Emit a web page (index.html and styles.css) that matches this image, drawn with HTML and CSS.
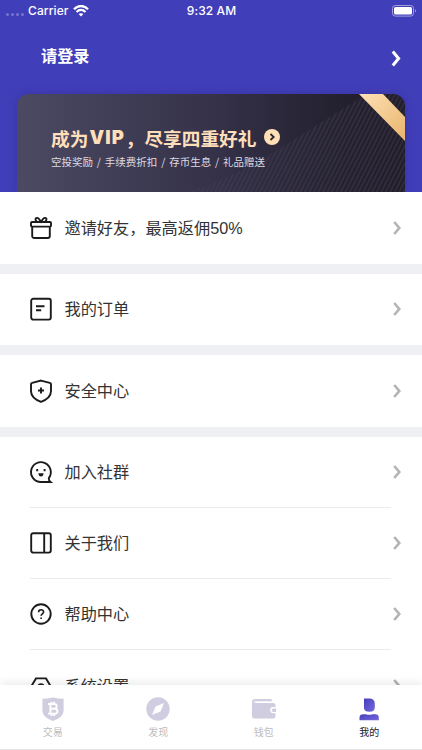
FILE: index.html
```html
<!DOCTYPE html>
<html lang="zh-CN">
<head>
<meta charset="utf-8">
<title>我的</title>
<link rel="stylesheet" href="styles.css">
</head>
<body>
<svg class="defs" width="0" height="0" aria-hidden="true">
  <symbol id="chevron" viewBox="0 0 8 14"><path d="M1.2 1 6.3 7 1.2 13" fill="none" stroke="currentColor" stroke-width="2.7"/></symbol>
</svg>
<div class="app">
  <header class="hero">
    <div class="status">
      <div class="status-left">
        <span class="dots"><i></i><i></i><i></i><i></i></span>
        <span class="carrier">Carrier</span>
        <svg class="wifi" width="16" height="12" viewBox="0 0 16 12" fill="none" stroke="#fff"><path d="M1 4.2C5-.1 11-.1 15 4.2" stroke-width="2.3"/><path d="M3.5 7C6.2 4.2 9.8 4.2 12.5 7" stroke-width="2.1"/><path d="M8 11.5 5.6 9.1C7 7.8 9 7.8 10.4 9.1Z" fill="#fff" stroke="none"/></svg>
      </div>
      <span class="time">9:32 AM</span>
      <div class="status-right">
        <svg width="25" height="12" viewBox="0 0 25 12"><rect x=".5" y=".5" width="21" height="10.6" rx="2.8" fill="none" stroke="#a3a0df"/><rect x="2" y="2" width="18" height="7.6" rx="1.5" fill="#fff"/><path d="M23 4q2 1.8 0 3.6z" fill="#a3a0df"/></svg>
      </div>
    </div>
    <div class="login"><span>请登录</span><svg class="login-arrow" width="10" height="17" viewBox="0 0 10 17"><path d="M1.8 1.5 7.6 8.5 1.8 15.5" fill="none" stroke="#fff" stroke-width="3"/></svg></div>
    <div class="banner">
      <svg class="banner-art" width="388" height="98" viewBox="0 0 388 98">
        <defs>
          <linearGradient id="dark" x1="0" y1="0" x2="1" y2="0"><stop offset="0" stop-color="#4b4a62"/><stop offset=".5" stop-color="#35324a"/><stop offset=".82" stop-color="#242130"/><stop offset="1" stop-color="#211c29"/></linearGradient>
          <linearGradient id="gold" x1="0" y1="0" x2="1" y2="1"><stop offset="0" stop-color="#ffe0b6"/><stop offset="1" stop-color="#e8b56c"/></linearGradient>
          <pattern id="hatch" width="4" height="4" patternUnits="userSpaceOnUse" patternTransform="rotate(27)"><path d="M1 0V4" stroke="#464153" stroke-width=".8"/></pattern>
        </defs>
        <rect width="388" height="98" fill="url(#dark)"/>
        <path d="M170 98C225 84 290 36 350 0H388V98Z" fill="url(#hatch)"/>
        <path d="M342 0H366L388 23V47Z" fill="url(#gold)"/>
      </svg>
      <div class="banner-copy">
        <div class="banner-title"><span>成为</span><span class="vip">VIP</span><span class="comma">，</span><span>尽享四重好礼</span>
          <svg class="go" width="16" height="16" viewBox="0 0 16 16"><circle cx="8" cy="8" r="8" fill="#ffdfb5"/><path d="m6.5 5 3.2 3-3.2 3" fill="none" stroke="#29242d" stroke-width="1.8"/></svg>
        </div>
        <div class="banner-sub">空投奖励 / 手续费折扣 / 存币生息 / 礼品赠送</div>
      </div>
    </div>
  </header>

  <main class="menu">
    <section class="group"><div class="row">
      <svg class="icon" viewBox="0 0 22 22"><rect x="1" y="5" width="20" height="4.6" rx="1"/><path d="M2.2 9.6V19a2 2 0 0 0 2 2h13.6a2 2 0 0 0 2-2V9.6M7 5C3.5 1.4 7-.5 9 2l2 2.8L13 2c2-2.5 5.500-.6 2 3"/></svg>
      <span>邀请好友，最高返佣50%</span><svg class="arrow"><use href="#chevron"/></svg></div></section>
    <section class="group"><div class="row">
      <svg class="icon" viewBox="0 0 22 22"><rect x="1.200" y=".8" width="19.600" height="20.800" rx="2"/><path d="M6 8.300h8.500M6 12.300h5.200"/></svg>
      <span>我的订单</span><svg class="arrow"><use href="#chevron"/></svg></div></section>
    <section class="group"><div class="row">
      <svg class="icon" viewBox="0 0 22 22"><path d="M11 .6 19.800 2.800Q21 3.100 21 4.300V11c0 5.400-4 8.600-10 10.900C5 19.600 1 16.400 1 11V4.300Q1 3.100 2.200 2.800Z"/><path d="M11 7.500v6M8 10.500h6"/></svg>
      <span>安全中心</span><svg class="arrow"><use href="#chevron"/></svg></div></section>
    <section class="group list">
      <div class="row line">
        <svg class="icon" viewBox="0 0 22 22"><path d="M20.500 21H11A9.900 9.900 0 1 1 18.800 17.100Q18.600 19.500 20.500 21Z"/><path d="M7.200 8v2.200M14.600 8v2.200"/><path d="M8.400 12.300h5.200q-.3 3.200-2.600 3.200t-2.600-3.200Z" fill="#1b1b1b" stroke="none"/></svg>
        <span>加入社群</span><svg class="arrow"><use href="#chevron"/></svg></div>
      <div class="row line">
        <svg class="icon" viewBox="0 0 22 22"><rect x="1.200" y="1.200" width="19.600" height="19.400" rx="2"/><path d="M14.200 1v20"/></svg>
        <span>关于我们</span><svg class="arrow"><use href="#chevron"/></svg></div>
      <div class="row line">
        <svg class="icon" viewBox="0 0 22 22"><circle cx="11" cy="11" r="9.700"/><path d="M8.600 9.300c0-3.300 5-3.200 5-.3 0 1.900-2.500 1.900-2.500 3.800M11.100 14.500v1.500" stroke-width="1.600"/></svg>
        <span>帮助中心</span><svg class="arrow"><use href="#chevron"/></svg></div>
      <div class="row">
        <svg class="icon" viewBox="0 0 22 22"><path d="M6 3.400h10l5 8.400-5 8.400H6L1 11.800Z"/><circle cx="11" cy="11.800" r="2.700"/></svg>
        <span>系统设置</span><svg class="arrow"><use href="#chevron"/></svg></div>
    </section>
  </main>

  <nav class="tabs">
    <div class="tab"><svg width="24" height="24" viewBox="0 0 24 24"><path d="M1.400 1.600Q7 2 12 .6q5 1.400 10.600 1V13c0 6-5 8.700-10.600 11C6.400 21.700 1.400 19 1.400 13Z" fill="#cfcddf"/><path d="M7 7h6.200c3.300 0 3.300 4.700 0 4.700H9.400M9.400 7v9.600M7 16.600h6.700c3.700 0 3.700-4.900 0-4.900M10.500 4.700v2M13.200 4.700v2M10.500 17v2M13.200 17v2" fill="none" stroke="#fff" stroke-width="1.900"/></svg><span>交易</span></div>
    <div class="tab"><svg width="24" height="24" viewBox="0 0 24 24"><circle cx="12" cy="12" r="11.700" fill="#cfcddf"/><path d="m18 6-3.500 8.500L6 18l3.500-8.500Z" fill="#fff"/></svg><span>发现</span></div>
    <div class="tab"><svg width="24" height="24" viewBox="0 0 24 24"><path d="M3 2h15.500q1.500 0 1.500 1.500V5H3.500v1H21q2.500 0 2.500 2.500V19q0 2.500-2.500 2.500H2.500Q0 21.500 0 19V5Q0 2 3 2Z" fill="#cfcddf"/><path d="M2.300 4.900H20" stroke="#fff" stroke-width="1.200"/><path d="M24 10h-2.800a3.100 3.100 0 0 0 0 6.200H24Z" fill="#fff"/><path d="M24 11.500h-2.500a1.700 1.700 0 0 0 0 3.400H24Z" fill="#cfcddf"/></svg><span>钱包</span></div>
    <div class="tab active"><svg width="24" height="24" viewBox="0 0 24 24"><defs><linearGradient id="violet" x1="0" y1="0" x2="1" y2="1"><stop offset="0" stop-color="#4540b9"/><stop offset="1" stop-color="#7868df"/></linearGradient></defs><path d="M7 1.500h5.500q5.300 0 5.300 5.500v3.300q0 4.500-5.400 4.500T7 10.500Z" fill="url(#violet)"/><path d="M2.500 23.300V20.600q0-3.400 3.800-3.400h2.500q3.400 1 6.800 0H18q3.800 0 3.800 3.400v2.700Z" fill="url(#violet)"/></svg><span>我的</span></div>
  </nav>
</div>
</body>
</html>
```
FILE: styles.css
```css
* { box-sizing: border-box; }
body {
  margin: 0;
  background: #fff;
  color: #333;
  font-family: "Liberation Sans", "Noto Sans CJK SC", sans-serif;
}
.defs { position: absolute; }
.app {
  width: 422px;
  height: 750px;
  display: grid;
  grid-template-rows: 192px 493px 65px;
  overflow: hidden;
}
.hero {
  background: #413eb9;
  color: #fff;
  display: grid;
  grid-template-rows: 22px 72px 98px;
}
.status {
  display: grid;
  grid-template-columns: 1fr auto 1fr;
  align-items: center;
  padding: 0 5px 1px 6px;
  font: 500 12px/20px Inter, sans-serif;
  letter-spacing: .1px;
}
.status-left { display: flex; align-items: center; }
.dots { display: flex; gap: 2px; margin: 7px 4px 0 0; }
.dots i { width: 3px; height: 3px; border-radius: 50%; background: #7774d1; }
.wifi { margin-left: 4px; }
.status-right { display: flex; justify-content: flex-end; }
.login {
  display: flex;
  justify-content: space-between;
  align-items: flex-start;
  padding: 21px 21px 0 41px;
  font: 700 16.200px/24px "Noto Sans CJK SC", sans-serif;
}
.login-arrow { margin-top: 7px; }
.banner {
  display: grid;
  width: 388px;
  margin-left: 17px;
  border-radius: 12px 12px 0 0;
  overflow: hidden;
  box-shadow: 0 0 9px rgba(35, 30, 100, .28);
}
.banner-art, .banner-copy { grid-area: 1 / 1; }
.banner-copy { padding: 31px 0 0 34px; font-family: "Noto Sans CJK SC", sans-serif; }
.banner-title {
  display: flex;
  align-items: center;
  height: 24px;
  color: #ffdfba;
  font-size: 18.700px;
  font-weight: 700;
  white-space: nowrap;
}
.vip { font: 900 18.500px/24px Inter, sans-serif; width: 37px; letter-spacing: 1.100px; padding-left: 1px; }
.comma { width: 19px; }
.go { margin-left: 7px; }
.banner-sub { margin-top: 5px; color: #dedbe4; font-size: 10.500px; line-height: 16px; word-spacing: 1.500px; white-space: nowrap; }

.menu { overflow: hidden; background: #eff0f3; display: flex; flex-direction: column; gap: 10px; }
.group { flex: none; background: #fff; }
.row {
  display: flex;
  align-items: center;
  height: 71.500px;
  margin: 0 31px 0 30px;
  color: #333;
  font-size: 16.200px;
}
.list .row { height: 71.300px; }
.line { border-bottom: 1px solid #ebebed; }
.row > span { white-space: nowrap; margin-top: -2px; }
.icon {
  width: 22px;
  height: 22px;
  margin-right: 12.500px;
  fill: none;
  stroke: #1b1b1b;
  stroke-width: 1.900;
  overflow: visible;
}
.arrow { width: 8px; height: 14px; margin: 0 -10px 0 auto; color: #b4b4b4; }

.tabs {
  position: relative;
  display: grid;
  grid-template-columns: repeat(4, 1fr);
  background: #fff;
  border-bottom: 1px solid #e5e5e7;
  box-shadow: 0 -2px 9px rgba(0, 0, 0, .09);
}
.tab {
  display: flex;
  flex-direction: column;
  align-items: center;
  padding-top: 12px;
  color: #bcbcbf;
  font: 400 10px/14px "Noto Sans CJK SC", sans-serif;
}
.tab span { margin-top: 4px; }
.active { color: #222; }
```
